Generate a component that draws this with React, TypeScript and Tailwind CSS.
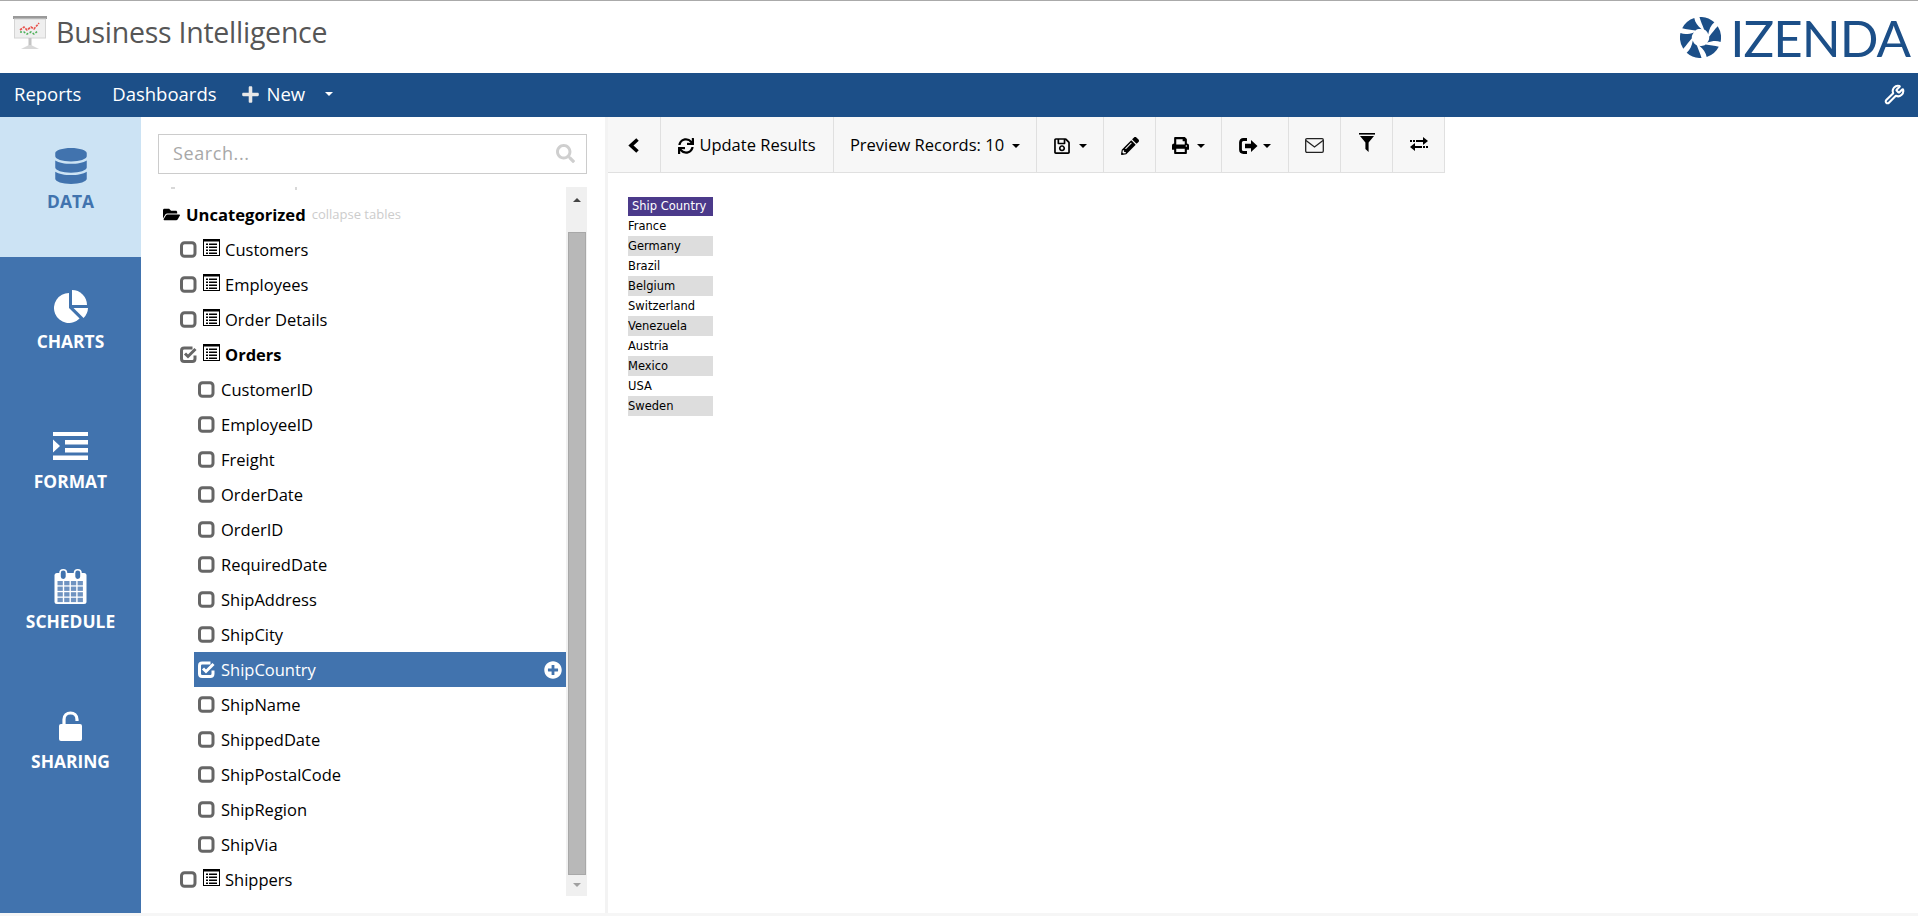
import React from "react";
import { FaDatabase, FaSync, FaRegSave, FaPencilAlt, FaPrint, FaFolderOpen, FaSearch, FaPlusCircle, FaPlus } from "react-icons/fa";
import { Wrench } from "lucide-react";

const Caret = ({ className = "" }: { className?: string }) => (
  <span className={"inline-block w-0 h-0 border-l-[4px] border-r-[4px] border-t-[4px] border-l-transparent border-r-transparent border-t-current " + className} />
);

const Check = ({ checked, color = "#666666" }: { checked?: boolean; color?: string }) => (
  <svg width="17" height="17" viewBox="0 0 17 17" className="shrink-0">
    {checked ? (
      <>
        <path d="M12.5 2H4.2Q1.5 2 1.5 4.7V12.8Q1.5 15.5 4.2 15.5H12.3Q15 15.5 15 12.8V9.5" fill="none" stroke={color} strokeWidth="3" />
        <path d="M5 7.5l3 3L15.5 3" fill="none" stroke={color} strokeWidth="3" />
      </>
    ) : (
      <rect x="1.5" y="1.8" width="13.5" height="13.5" rx="3" fill="none" stroke={color} strokeWidth="3" />
    )}
  </svg>
);

const TableIcon = () => (
  <svg width="17" height="17" viewBox="0 0 17 17" className="shrink-0 mb-[5px]">
    <rect x="0.5" y="0.5" width="16" height="16" fill="#fff" stroke="#000" strokeWidth="1" />
    <rect x="0" y="0" width="17" height="2.5" fill="#000" />
    {[5, 8, 11, 14].map((y) => (
      <g key={y}>
        <rect x="3" y={y - 0.5} width="2" height="1.5" fill="#000" />
        <rect x="6" y={y - 0.5} width="8" height="1.5" fill="#000" />
      </g>
    ))}
  </svg>
);

const PieIcon = () => (
  <svg width="34" height="33" viewBox="0 0 34 33" fill="currentColor">
    <path d="M15 3A15 15 0 1 0 25.6 28.6L15 18Z" />
    <path d="M18 0A15 15 0 0 1 33 15L18 15Z" />
    <path d="M19.5 18H34A15 15 0 0 1 29.6 28Z" />
  </svg>
);

const FormatIcon = () => (
  <svg width="35" height="28" viewBox="0 0 35 28" fill="#fff">
    <rect x="0" y="0" width="35" height="4" />
    <rect x="12" y="8" width="23" height="4.5" />
    <rect x="12" y="16" width="23" height="4.5" />
    <rect x="0" y="23.5" width="35" height="4.5" />
    <path d="M0 7.5l7 6.5-7 6.5z" />
  </svg>
);

const CalendarIcon = () => (
  <svg width="33" height="35" viewBox="0 0 33 35">
    <rect x="0.5" y="4" width="32" height="31" rx="2.5" fill="#fff" />
    {[0, 1, 2, 3].map((c) =>
      [0, 1, 2, 3].map((r) => (
        <rect key={c + "-" + r} x={3.5 + c * 6.7} y={12 + r * 5.6} width="5.3" height="4.3" fill="#6f93c1" />
      ))
    )}
    <rect x="6" y="0.8" width="6.5" height="10" rx="3.2" fill="#4173ae" stroke="#fff" strokeWidth="1.6" />
    <rect x="20.5" y="0.8" width="6.5" height="10" rx="3.2" fill="#4173ae" stroke="#fff" strokeWidth="1.6" />
  </svg>
);

const UnlockIcon = () => (
  <svg width="24" height="31" viewBox="0 0 24 31" fill="none">
    <rect x="0" y="13" width="23" height="17" rx="2" fill="#fff" />
    <path d="M5 14V8.5C5 4.5 8 2 11.5 2S18 4.5 18 8.5V10" stroke="#fff" strokeWidth="3.2" />
  </svg>
);

const ChevronIcon = () => (
  <svg width="12" height="15" viewBox="0 0 12 15" fill="none">
    <path d="M9.5 1.5L3 7.5L9.5 13.5" stroke="#000" strokeWidth="3.6" />
  </svg>
);

const SignOutIcon = () => (
  <svg width="19" height="16" viewBox="0 0 19 16">
    <path d="M8 1.5H4.5Q1.5 1.5 1.5 4.5V11.5Q1.5 14.5 4.5 14.5H8" fill="none" stroke="#000" strokeWidth="2.8" />
    <path d="M6 5.8H12V2L18.5 8L12 14V10.2H6Z" fill="#000" />
  </svg>
);

const EnvelopeIcon = () => (
  <svg width="19" height="15" viewBox="0 0 19 15" fill="none" stroke="#222" strokeWidth="1.3">
    <rect x="0.7" y="0.7" width="17.6" height="13.6" rx="1.2" />
    <path d="M1 2.5L9.5 9L18 2.5" />
  </svg>
);

const FilterIcon = () => (
  <svg width="16" height="19" viewBox="0 0 16 19">
    <rect x="0" y="0" width="16" height="1.6" fill="#000" />
    <path d="M1 3h14L9.6 9.5V19L6.4 16V9.5z" fill="#000" />
  </svg>
);

const ExchangeIcon = () => (
  <svg width="18" height="14" viewBox="0 0 18 14" fill="#000">
    <rect x="0" y="3" width="2" height="2" />
    <rect x="3" y="3" width="2" height="2" />
    <rect x="6" y="3" width="7" height="2" />
    <path d="M13 0l5 4-5 4z" />
    <path d="M5 6l-5 4 5 4z" />
    <rect x="5" y="9" width="7" height="2" />
    <rect x="13" y="9" width="2" height="2" />
    <rect x="16" y="9" width="2" height="2" />
  </svg>
);

const PresentationIcon = () => (
  <svg width="34" height="35" viewBox="0 0 34 35">
    <rect x="0" y="1" width="34" height="3" fill="#9a9a9a" />
    <rect x="1.5" y="4" width="31" height="19" fill="#efefef" stroke="#d4d4d4" />
    <path d="M7 15l4-3 3 3 4-3 3 2 5-6" fill="none" stroke="#e8504a" strokeWidth="1.6" strokeDasharray="2.5 1" />
    <path d="M7 17l4 0 3 2 4-2 3 2 4-3" fill="none" stroke="#4fb05a" strokeWidth="1.6" strokeDasharray="2 1.5" />
    <rect x="15.5" y="23" width="3" height="8" fill="#c4c4c4" />
    <path d="M8 34l8-4h2l8 4z" fill="#d8d8d8" />
  </svg>
);

const Swirl = () => (
  <svg width="41" height="41" viewBox="0 0 40 40" fill="#1c4f88">
    {[0, 1, 2, 3, 4, 5].map((i) => (
      <path key={i} transform={`rotate(${i * 60} 20 20)`} d="M19 0A20 20 0 0 1 33.5 5.2C30 8 28.5 12 27.5 17C27 15 25.5 13 23.5 12.3C22 8 20 4 19 0Z" />
    ))}
  </svg>
);

const navItems: [string, React.ReactNode, string][] = [
  ["DATA", <FaDatabase size={36} />, "bg-[#cce3f4] text-[#4173ae]"],
  ["CHARTS", <PieIcon />, "text-white"],
  ["FORMAT", <FormatIcon />, "text-white"],
  ["SCHEDULE", <CalendarIcon />, "text-white"],
  ["SHARING", <UnlockIcon />, "text-white"],
];

const fields = ["CustomerID", "EmployeeID", "Freight", "OrderDate", "OrderID", "RequiredDate", "ShipAddress", "ShipCity", "ShipCountry", "ShipName", "ShippedDate", "ShipPostalCode", "ShipRegion", "ShipVia"];
const rowsData = ["France", "Germany", "Brazil", "Belgium", "Switzerland", "Venezuela", "Austria", "Mexico", "USA", "Sweden"];

const TableRow = ({ name, checked }: { name: string; checked?: boolean }) => (
  <div className="h-[35px] flex items-center pl-[22px] text-[16.5px] text-black">
    <Check checked={checked} />
    <span className="ml-[6px]"><TableIcon /></span>
    <span className={"ml-[5px] pt-[1px] " + (checked ? "font-bold" : "")}>{name}</span>
  </div>
);

const ToolBtn = ({ w, children }: { w: string; children: React.ReactNode }) => (
  <div className={"h-full flex items-center justify-center pt-[2px] border-r border-[#e0e0e0] text-black " + w}>{children}</div>
);

export default function App() {
  return (
    <div className="w-[1918px] h-[916px] flex flex-col overflow-hidden bg-white font-['Open_Sans',sans-serif]">
      <header className="h-[73px] shrink-0 border-t border-[#aaaaaa] flex items-center justify-between bg-white">
        <div className="flex items-center pl-[13px] pb-[10px]">
          <PresentationIcon />
          <span className="ml-[9px] text-[28.5px] text-[#565656] tracking-[-0.25px]">Business Intelligence</span>
        </div>
        <div className="flex items-center pr-[8px]">
          <Swirl />
          <span className="ml-[9px] font-['Lato',sans-serif] text-[51px] leading-none text-[#1c4f88] tracking-[-1px]">IZENDA</span>
        </div>
      </header>
      <nav className="h-[44px] shrink-0 bg-[#1c4f88] flex items-center pb-[2px] text-white text-[18.5px]">
        <span className="ml-[14px]">Reports</span>
        <span className="ml-[31px]">Dashboards</span>
        <FaPlus size={19} className="ml-[24px] text-[#e8e8e8]" />
        <span className="ml-[7px]">New</span>
        <Caret className="ml-[20px]" />
        <Wrench size={21} strokeWidth={2.4} className="ml-auto mr-[13px]" />
      </nav>
      <div className="h-[796px] shrink-0 flex min-h-0">
        <aside className="w-[141px] shrink-0 h-[796px] bg-[#4173ae]">
          {navItems.map(([label, icon, cls]) => (
            <div key={label} className={"h-[140px] flex flex-col items-center pt-[29px] " + cls}>
              <div className="h-[40px] flex items-center justify-center">{icon}</div>
              <span className="mt-[3px] font-bold text-[17.4px] leading-[24px]">{label}</span>
            </div>
          ))}
        </aside>
        <section className="w-[464px] shrink-0 pl-[17px] pt-[17px] flex flex-col">
          <div className="w-[429px] h-[40px] border border-[#cccccc] flex items-center justify-between pl-[14px] pr-[11px] pb-[2px] shrink-0">
            <span className="text-[18px] text-[#a8a8a8] tracking-[0.6px]">Search...</span>
            <FaSearch size={19} className="text-[#cfcfcf]" />
          </div>
          <div className="mt-[13px] w-[429px] h-[709px] flex shrink-0">
            <div className="w-[408px] shrink-0">
              <div className="h-[10px] flex items-start pl-[13px]">
                <span className="w-[4px] h-[2px] bg-[#d8d8d8]" />
                <span className="ml-[120px] w-[2px] h-[3px] bg-[#d8d8d8]" />
              </div>
              <div className="h-[35px] flex items-center pl-[5px]">
                <FaFolderOpen size={17} className="text-black" />
                <span className="ml-[6px] pt-[1px] text-[16.6px] font-bold text-black">Uncategorized</span>
                <span className="ml-[6px] pt-[1px] text-[13px] text-[#cccccc]">collapse tables</span>
              </div>
              <TableRow name="Customers" />
              <TableRow name="Employees" />
              <TableRow name="Order Details" />
              <TableRow name="Orders" checked />
              {fields.map((f) => {
                const active = f === "ShipCountry";
                return (
                  <div key={f} className={"h-[35px] ml-[36px] flex items-center pl-[4px] text-[16.5px] " + (active ? "bg-[#4173ae] text-white" : "text-black")}>
                    <Check checked={active} color={active ? "#ffffff" : "#666666"} />
                    <span className="ml-[6px] pt-[1px]">{f}</span>
                    {active && <FaPlusCircle size={18} className="ml-auto mr-[4px] text-white" />}
                  </div>
                );
              })}
              <TableRow name="Shippers" />
            </div>
            <div className="w-[21px] shrink-0 bg-[#f0f0f0] flex flex-col items-center pt-[11px]">
              <span className="inline-block w-0 h-0 border-l-[4px] border-r-[4px] border-b-[4px] border-l-transparent border-r-transparent border-b-[#444444]" />
              <div className="mt-[30px] w-[18px] h-[643px] bg-[#b8b8b8] border border-[#a8a8a8]" />
              <Caret className="mt-[8px] text-[#a0a0a0]" />
            </div>
          </div>
        </section>
        <div className="w-[3px] shrink-0 bg-[#f3f3f3]" />
        <main className="flex-1 min-w-0 flex flex-col">
          <div className="h-[56px] w-[837px] bg-[#f7f7f7] border-b border-[#e0e0e0] flex items-center text-[16.5px] text-[#222222] shrink-0">
            <ToolBtn w="w-[53px]"><ChevronIcon /></ToolBtn>
            <ToolBtn w="w-[173px]"><FaSync size={16} className="mr-[5px]" />Update Results</ToolBtn>
            <ToolBtn w="w-[203px]">Preview Records: 10<Caret className="ml-[8px]" /></ToolBtn>
            <ToolBtn w="w-[67px]"><FaRegSave size={18} /><Caret className="ml-[8px]" /></ToolBtn>
            <ToolBtn w="w-[52px]"><FaPencilAlt size={18} /></ToolBtn>
            <ToolBtn w="w-[66px]"><FaPrint size={17} /><Caret className="ml-[8px]" /></ToolBtn>
            <ToolBtn w="w-[67px]"><SignOutIcon /><Caret className="ml-[5px]" /></ToolBtn>
            <ToolBtn w="w-[52px]"><EnvelopeIcon /></ToolBtn>
            <ToolBtn w="w-[52px]"><div className="pb-[6px]"><FilterIcon /></div></ToolBtn>
            <ToolBtn w="w-[52px]"><div className="pb-[4px]"><ExchangeIcon /></div></ToolBtn>
          </div>
          <div className="ml-[20px] mt-[24px] w-[85px] font-['DejaVu_Sans',sans-serif] text-[11.5px] text-black">
            <div className="h-[19px] bg-[#4b3a8a] text-white flex items-center pl-[4px] whitespace-nowrap overflow-hidden">Ship Country</div>
            {rowsData.map((r, i) => (
              <div key={r} className={"h-[20px] pt-[1px] flex items-center " + (i % 2 ? "bg-[#dddddd]" : "")}>{r}</div>
            ))}
          </div>
        </main>
      </div>
      <div className="h-[3px] shrink-0 bg-[#f6f6f6]" />
    </div>
  );
}
